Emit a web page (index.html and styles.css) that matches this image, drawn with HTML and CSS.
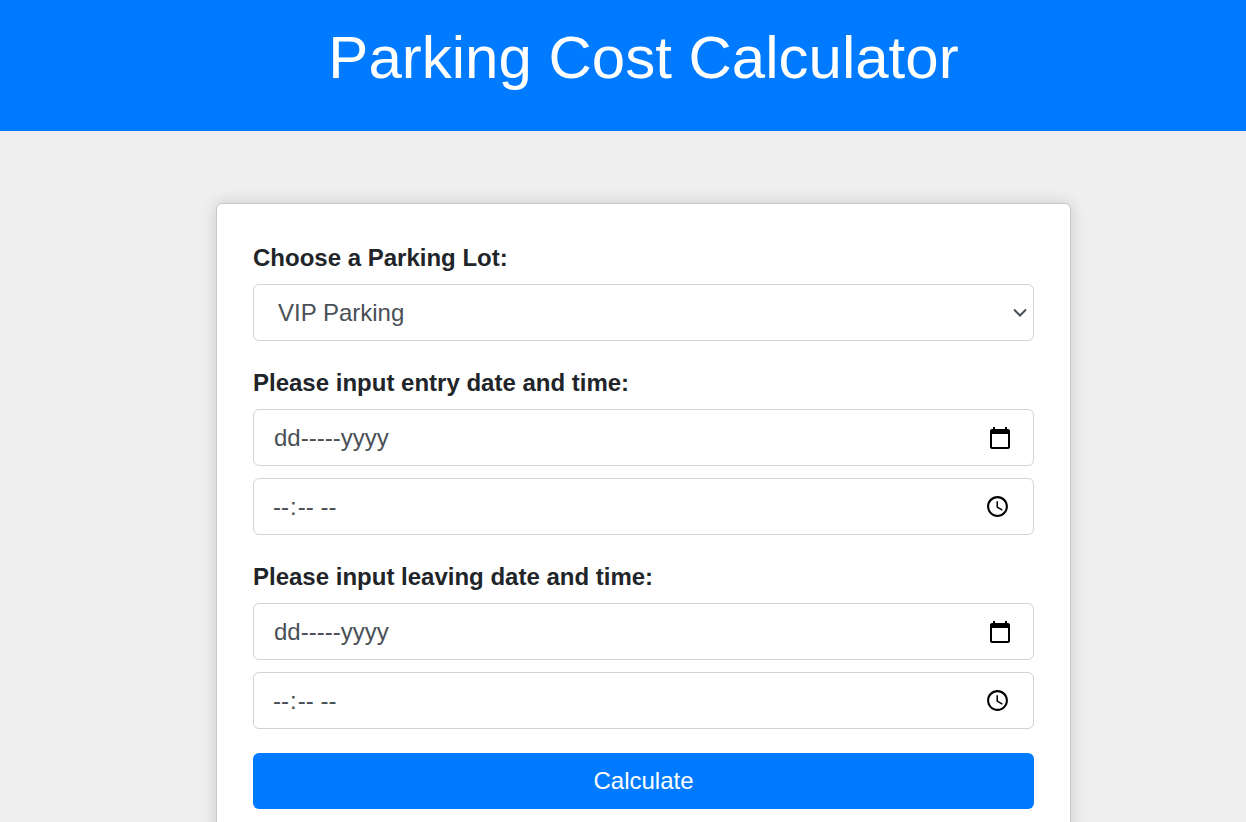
FILE: index.html
```html
<!DOCTYPE html>
<html lang="en">
<head>
  <meta charset="utf-8">
  <meta name="viewport" content="width=device-width, initial-scale=1">
  <title>Parking Cost Calculator</title>
  <link rel="stylesheet" href="styles.css">
</head>
<body>
  <header class="banner">
    <h1 class="banner-title">Parking Cost Calculator</h1>
  </header>
  <main class="page">
    <form class="card">
      <div class="group">
        <label class="label" for="lot">Choose a Parking Lot:</label>
        <div class="select-wrap">
          <select class="control select" id="lot">
            <option>VIP Parking</option>
          </select>
          <svg class="chevron" viewBox="0 0 14 10" aria-hidden="true"><path d="M1 1.5l6 6 6-6"/></svg>
        </div>
      </div>
      <div class="group">
        <label class="label" for="entry-date">Please input entry date and time:</label>
        <div class="fields">
          <div class="control date-field">
            <input class="date-input" id="entry-date" type="text" placeholder="dd-----yyyy">
            <button class="picker" type="button" aria-label="Pick entry date">
              <svg class="icon" viewBox="0 0 24 24"><path d="M20 3h-1V1h-2v2H7V1H5v2H4c-1.1 0-2 .9-2 2v16c0 1.1.9 2 2 2h16c1.1 0 2-.9 2-2V5c0-1.1-.9-2-2-2zm0 18H4V8h16v13z"/></svg>
            </button>
          </div>
          <input class="control time" type="time" aria-label="Entry time">
        </div>
      </div>
      <div class="group">
        <label class="label" for="leave-date">Please input leaving date and time:</label>
        <div class="fields">
          <div class="control date-field">
            <input class="date-input" id="leave-date" type="text" placeholder="dd-----yyyy">
            <button class="picker" type="button" aria-label="Pick leaving date">
              <svg class="icon" viewBox="0 0 24 24"><path d="M20 3h-1V1h-2v2H7V1H5v2H4c-1.1 0-2 .9-2 2v16c0 1.1.9 2 2 2h16c1.1 0 2-.9 2-2V5c0-1.1-.9-2-2-2zm0 18H4V8h16v13z"/></svg>
            </button>
          </div>
          <input class="control time" type="time" aria-label="Leaving time">
        </div>
      </div>
      <button class="submit" type="submit">Calculate</button>
    </form>
  </main>
</body>
</html>
```

FILE: styles.css
```css
* {
  box-sizing: border-box;
}

html {
  overflow: hidden;
}

body {
  margin: 0;
  background: #efefef;
  color: #212529;
  font-family: "Liberation Sans", Arial, sans-serif;
  font-size: 24px;
  line-height: 36px;
}

.banner {
  padding: 22px 0 37px 41px;
  background: #007bff;
  color: #fff;
  text-align: center;
}

.banner-title {
  margin: 0;
  font-size: 60px;
  font-weight: 400;
  line-height: 72px;
}

.page {
  padding: 72px 0 72px 41px;
}

.card {
  display: flex;
  flex-direction: column;
  gap: 24px;
  max-width: 855px;
  margin: 0 auto;
  padding: 36px;
  border: 1px solid #c8c8c8;
  border-radius: 6px;
  background: #fff;
  box-shadow: 0 0 16px rgba(0, 0, 0, 0.15);
}

.group {
  display: flex;
  flex-direction: column;
  gap: 8px;
}

.label {
  font-weight: 700;
}

.fields {
  display: flex;
  flex-direction: column;
  gap: 12px;
}

.control {
  width: 100%;
  height: 57px;
  padding: 9px 18px;
  border: 1px solid #ced4da;
  border-radius: 6px;
  background: #fff;
  color: #495057;
  font: inherit;
}

.select-wrap {
  display: grid;
  align-items: center;
}

.select-wrap > * {
  grid-area: 1 / 1;
}

.select {
  padding-left: 24px;
  appearance: none;
}

.chevron {
  justify-self: end;
  width: 14px;
  height: 10px;
  margin-right: 7px;
  fill: none;
  stroke: #495057;
  stroke-width: 2;
  pointer-events: none;
}

.time {
  padding-right: 20px;
}

.date-field {
  display: flex;
  align-items: center;
  padding-right: 21px;
}

.date-input {
  flex: 1;
  min-width: 0;
  padding: 0 2px;
  border: 0;
  background: none;
  color: inherit;
  font: inherit;
}

.date-input::placeholder {
  color: #495057;
  opacity: 1;
}

.picker {
  display: flex;
  padding: 0;
  border: 0;
  background: none;
  color: #000;
}

.icon {
  width: 24px;
  height: 24px;
  fill: currentColor;
}

.submit {
  height: 56px;
  padding: 9px 18px;
  border: 0;
  border-radius: 6px;
  background: #007bff;
  color: #fff;
  font: inherit;
}
```
